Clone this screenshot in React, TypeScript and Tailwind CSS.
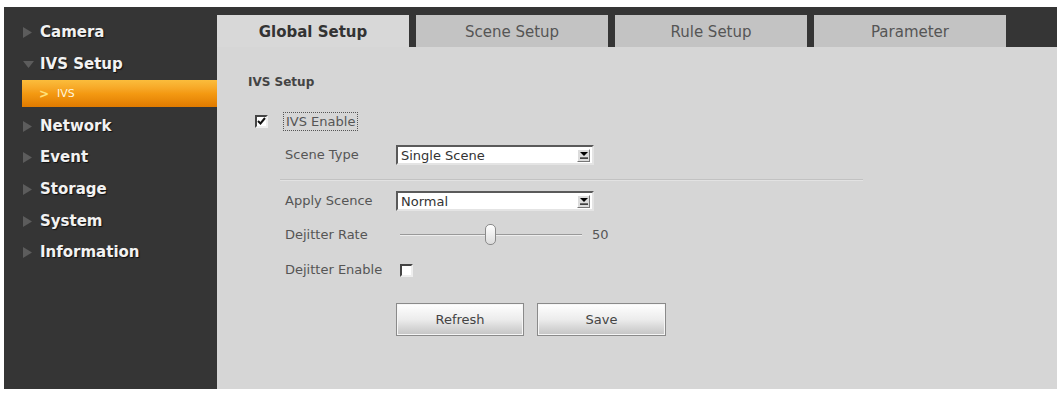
import React from 'react';

const sans = { fontFamily: '"DejaVu Sans", Verdana, sans-serif' };

const menu = [
  { id: 'camera', label: 'Camera' },
  { id: 'ivs', label: 'IVS Setup', open: true },
  { id: 'network', label: 'Network' },
  { id: 'event', label: 'Event' },
  { id: 'storage', label: 'Storage' },
  { id: 'system', label: 'System' },
  { id: 'information', label: 'Information' },
];

const tabs = ['Global Setup', 'Scene Setup', 'Rule Setup', 'Parameter'];

function Arrow({ down }: { down?: boolean }) {
  if (down) {
    return (
      <svg width="11" height="8" viewBox="0 0 11 8" className="shrink-0">
        <polygon points="0,0 11,0 5.5,7" fill="#5c5c5c" />
      </svg>
    );
  }
  return (
    <svg width="9" height="11" viewBox="0 0 9 11" className="shrink-0">
      <polygon points="0,0 9,5.5 0,11" fill="#5c5c5c" />
    </svg>
  );
}

function Select({ value }: { value: string }) {
  return (
    <div className="flex h-[20px] w-[198px] items-center justify-between border-2 border-t-[#5a5a5a] border-l-[#5a5a5a] border-r-[#e4e4e4] border-b-[#e4e4e4] bg-white pl-[3px] pr-[2px]">
      <span className="text-[13px] leading-none text-[#333]">{value}</span>
      <div className="flex h-[13px] w-[13px] items-center justify-center border border-t-white border-l-white border-r-[#777] border-b-[#777] bg-[#dcdcdc]">
        <svg width="8" height="7" viewBox="0 0 8 7">
          <polygon points="0,0 8,0 4,4" fill="#000" />
          <rect x="0" y="5.5" width="8" height="1.2" fill="#000" />
        </svg>
      </div>
    </div>
  );
}

function Checkbox({ checked }: { checked?: boolean }) {
  return (
    <div className="flex h-[13px] w-[13px] items-center justify-center border-2 border-t-[#444] border-l-[#444] border-r-[#eee] border-b-[#eee] bg-white">
      {checked && (
        <svg width="9" height="8" viewBox="0 0 9 8">
          <polyline points="1,4 3.5,6.5 8,1" fill="none" stroke="#111" strokeWidth="2" />
        </svg>
      )}
    </div>
  );
}

function Button({ label, w }: { label: string; w: string }) {
  return (
    <button
      className={`flex h-[33px] ${w} items-center justify-center border border-[#8a8a8a] bg-gradient-to-b from-[#ffffff] via-[#ececec] to-[#c4c4c4] text-[13px] text-[#444] shadow-[inset_0_0_0_1px_#f6f6f6]`}
    >
      {label}
    </button>
  );
}

export default function App() {
  return (
    <div className="h-[393px] w-[1060px] bg-white pl-[4px] pt-[7px]" style={sans}>
      <div className="flex h-[382px] w-[1053px]">
        {/* Sidebar */}
        <div className="w-[213px] shrink-0 bg-[#353535] pt-[10px]">
          {menu.map((m) => (
            <React.Fragment key={m.id}>
              <div className="flex h-[31.7px] items-center pl-[19px]">
                <div className="flex w-[17px] items-center">
                  <Arrow down={m.open} />
                </div>
                <span className="text-[15px] font-bold leading-none text-[#f2f2f2] [text-shadow:1px_1px_1px_#111]">
                  {m.label}
                </span>
              </div>
              {m.open && (
                <div className="h-[30px] pl-[18px]">
                  <div className="flex h-[27px] items-center bg-gradient-to-b from-[#fbbd3c] via-[#f49a12] to-[#e07a00] pl-[17px]">
                    <span className="text-[12px] font-bold leading-none text-[#ffe27a]">&gt;</span>
                    <span className="ml-[8px] text-[11px] leading-none text-[#fff4dc]">IVS</span>
                  </div>
                </div>
              )}
            </React.Fragment>
          ))}
        </div>

        {/* Main */}
        <div className="flex flex-1 flex-col">
          <div className="flex h-[40px] shrink-0 gap-[7px] bg-[#353535] pt-[8px]">
            {tabs.map((t, i) => (
              <div
                key={t}
                className={`flex h-[32px] w-[192px] items-center justify-center pt-[2px] text-[15px] ${
                  i === 0 ? 'bg-[#d8d8d8] font-bold text-[#333]' : 'bg-[#c3c3c3] text-[#555]'
                }`}
              >
                {t}
              </div>
            ))}
          </div>

          <div className="flex-1 bg-[#d6d6d6] pl-[31px] text-[13px] text-[#555]">
            <div className="mt-[27px] h-[16px] text-[12px] font-bold leading-[16px] text-[#444]">IVS Setup</div>

            <div className="mt-[21px] flex h-[20px] items-center pl-[7px]">
              <Checkbox checked />
              <div className="ml-[15px] border border-dotted border-[#555] px-[2px] py-[1px] leading-[15px]">
                IVS Enable
              </div>
            </div>

            <div className="mt-[14px] flex h-[20px] items-center pl-[37px]">
              <span className="w-[111px]">Scene Type</span>
              <Select value="Single Scene" />
            </div>

            <div className="ml-[32px] mt-[14px] h-[2px] w-[583px] border-t border-[#c2c2c2] bg-[#e2e2e2]" />

            <div className="mt-[10px] flex h-[20px] items-center pl-[37px]">
              <span className="w-[111px]">Apply Scence</span>
              <Select value="Normal" />
            </div>

            <div className="mt-[14px] flex h-[20px] items-center pl-[37px]">
              <span className="w-[111px]">Dejitter Rate</span>
              <div className="relative ml-[4px] flex h-[20px] w-[182px] items-center">
                <div className="h-[2px] w-full border-t border-[#999] bg-[#eee]" />
                <div className="absolute left-[85px] top-[-1px] h-[21px] w-[11px] rounded-[5px] border border-[#8a8a8a] bg-gradient-to-b from-white to-[#dcdcdc]" />
              </div>
              <span className="ml-[10px]">50</span>
            </div>

            <div className="mt-[15px] flex h-[20px] items-center pl-[37px]">
              <span className="w-[115px]">Dejitter Enable</span>
              <Checkbox />
            </div>

            <div className="mt-[23px] flex gap-[13px] pl-[148px]">
              <Button label="Refresh" w="w-[128px]" />
              <Button label="Save" w="w-[129px]" />
            </div>
          </div>
        </div>
      </div>
    </div>
  );
}
